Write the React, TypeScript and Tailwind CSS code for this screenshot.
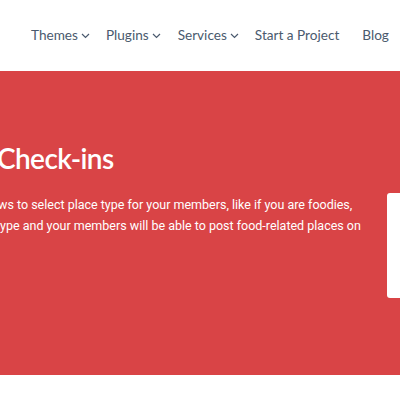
import React from "react";

function Chevron() {
  return (
    <svg width="9" height="6" viewBox="0 0 9 6" className="ml-[3px] mt-[3px]" fill="none">
      <path d="M1 1 L4.5 4.5 L8 1" stroke="#4a5a6e" strokeWidth="1.2" />
    </svg>
  );
}

function NavItem({ label, chevron, cls }: { label: string; chevron?: boolean; cls?: string }) {
  return (
    <div className={"flex items-center whitespace-nowrap " + (cls ?? "")}>
      <span>{label}</span>
      {chevron && <Chevron />}
    </div>
  );
}

export default function App() {
  return (
    <div className="w-[400px] h-[400px] overflow-hidden bg-white">
      <header
        className="h-[71px] flex items-center pl-[31px] text-[13.6px] text-[#4a5a6e]"
        style={{ fontFamily: "Lato, 'Open Sans', sans-serif" }}
      >
        <div className="flex items-center -mt-[1px]">
          <NavItem label="Themes" chevron />
          <NavItem label="Plugins" chevron cls="ml-[16px]" />
          <NavItem label="Services" chevron cls="ml-[17px]" />
          <NavItem label="Start a Project" cls="ml-[16px]" />
          <NavItem label="Blog" cls="ml-[23px]" />
        </div>
      </header>
      <section className="h-[304px] bg-[#d94446] relative overflow-hidden">
        <div className="pt-[69px]">
          <h1
            className="text-white text-[28px] leading-[36px] font-semibold -ml-[3px] whitespace-nowrap tracking-[-0.6px]"
            style={{ fontFamily: "Lato, sans-serif" }}
          >
            Check-ins
          </h1>
          <div
            className="mt-[18px] text-white text-[12.5px] leading-[21px] whitespace-nowrap"
            style={{ fontFamily: "Roboto, sans-serif" }}
          >
            <div className="-ml-[22px]">allows to select place type for your members, like if you are foodies,</div>
            <div className="-ml-[4px]">type and your members will be able to post food-related places on</div>
          </div>
        </div>
        <div className="absolute left-[387px] top-[122px] w-[20px] h-[105px] bg-white rounded-l-[3px]" />
      </section>
    </div>
  );
}
